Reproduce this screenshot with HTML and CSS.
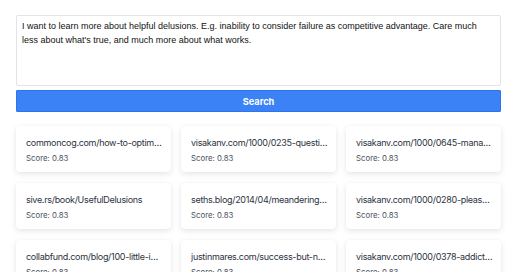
FILE: index.html
```html
<!DOCTYPE html>
<html lang="en">
<head>
  <meta charset="UTF-8">
  <meta name="viewport" content="width=device-width, initial-scale=1.0">
  <title>Search</title>
  <link rel="stylesheet" href="styles.css">
</head>
<body>
  <div class="page">
    <textarea class="query">I want to learn more about helpful delusions. E.g. inability to consider failure as competitive advantage. Care much less about what's true, and much more about what works.</textarea>
    <button class="search-btn">Search</button>

    <div class="results">
      <div class="card"><p class="url">commoncog.com/how-to-optimise-for-failure</p><p class="score">Score: 0.83</p></div>
      <div class="card"><p class="url">visakanv.com/1000/0235-questions-worth-asking</p><p class="score">Score: 0.83</p></div>
      <div class="card"><p class="url">visakanv.com/1000/0645-managing-yourself</p><p class="score">Score: 0.83</p></div>
      <div class="card"><p class="url">sive.rs/book/UsefulDelusions</p><p class="score">Score: 0.83</p></div>
      <div class="card"><p class="url">seths.blog/2014/04/meandering-thoughts</p><p class="score">Score: 0.83</p></div>
      <div class="card"><p class="url">visakanv.com/1000/0280-pleasant-delusions</p><p class="score">Score: 0.83</p></div>
      <div class="card"><p class="url">collabfund.com/blog/100-little-ideas</p><p class="score">Score: 0.83</p></div>
      <div class="card"><p class="url">justinmares.com/success-but-not-failure</p><p class="score">Score: 0.83</p></div>
      <div class="card"><p class="url">visakanv.com/1000/0378-addiction-to-progress</p><p class="score">Score: 0.83</p></div>
    </div>
  </div>
</body>
</html>
```

FILE: styles.css
```css
body {
  margin: 0;
  background-color: #fff;
  font-family: Inter, "Noto Sans", sans-serif;
  color: #1f2937;
}

.page {
  padding: 15px 19px 0 16px;
  display: flex;
  flex-direction: column;
}

.query {
  display: block;
  width: 100%;
  height: 71px;
  box-sizing: border-box;
  margin: 0;
  padding: 3px 5px;
  border: 1px solid #e3e4e8;
  border-radius: 2px;
  font-family: "Liberation Sans", Arial, sans-serif;
  font-size: 9px;
  line-height: 14px;
  color: #111;
  resize: none;
  outline: none;
}

.search-btn {
  margin-top: 4px;
  height: 22px;
  width: 100%;
  border: 1px solid #2f74ee;
  border-radius: 1px;
  background-color: #3b82f6;
  color: #fff;
  font-family: Inter, sans-serif;
  font-weight: 700;
  font-size: 9.2px;
  cursor: pointer;
}

.results {
  margin-top: 14px;
  display: grid;
  grid-template-columns: repeat(3, 1fr);
  column-gap: 10px;
  row-gap: 11px;
}

.card {
  height: 46px;
  box-sizing: border-box;
  padding: 10px 8px 0 10px;
  background-color: #fff;
  border-radius: 4px;
  box-shadow: 0 2px 6px rgba(0, 0, 0, 0.1), 0 0 2px rgba(0, 0, 0, 0.04);
  overflow: hidden;
}

.card p {
  margin: 0;
}

.url {
  font-size: 9px;
  line-height: 13px;
  letter-spacing: -0.3px;
  color: #2d3340;
  white-space: nowrap;
  overflow: hidden;
  text-overflow: ellipsis;
}

.score {
  margin-top: 3px !important;
  font-size: 7.8px;
  line-height: 12px;
  color: #4b5260;
}
```
